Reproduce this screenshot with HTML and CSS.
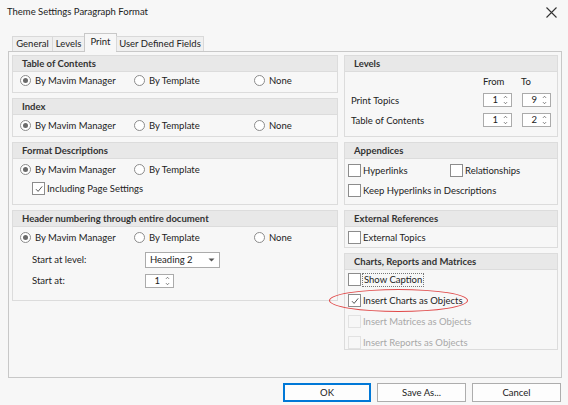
FILE: index.html
```html
<!DOCTYPE html>
<html>
<head>
<meta charset="utf-8">
<link rel="stylesheet" href="styles.css">
</head>
<body>
<div class="dialog">
  <div class="titlebar">
    <span class="title">Theme Settings Paragraph Format</span>
    <svg class="close" width="11" height="11" viewBox="0 0 11 11"><path d="M0.5 0.5 L10.5 10.5 M10.5 0.5 L0.5 10.5" stroke="#333" stroke-width="1.1" fill="none"/></svg>
  </div>
  <div class="tabs">
    <div class="tab t-general">General</div>
    <div class="tab t-levels">Levels</div>
    <div class="tab active t-print">Print</div>
    <div class="tab t-udf">User Defined Fields</div>
  </div>
  <div class="tabpanel">
    <div class="col">
      <div class="panel p-toc">
        <div class="phead">Table of Contents</div>
        <div class="pbody">
          <div class="radios">
            <label class="radio r1"><span class="rdot on"></span>By Mavim Manager</label>
            <label class="radio r2"><span class="rdot"></span>By Template</label>
            <label class="radio r3"><span class="rdot"></span>None</label>
          </div>
        </div>
      </div>
      <div class="panel p-index">
        <div class="phead">Index</div>
        <div class="pbody">
          <div class="radios">
            <label class="radio r1"><span class="rdot on"></span>By Mavim Manager</label>
            <label class="radio r2"><span class="rdot"></span>By Template</label>
            <label class="radio r3"><span class="rdot"></span>None</label>
          </div>
        </div>
      </div>
      <div class="panel p-format">
        <div class="phead">Format Descriptions</div>
        <div class="pbody">
          <div class="radios">
            <label class="radio r1"><span class="rdot on"></span>By Mavim Manager</label>
            <label class="radio r2"><span class="rdot"></span>By Template</label>
          </div>
          <label class="check indent"><span class="cbox"><svg width="10" height="10" viewBox="0 0 10 10"><path d="M2 5.2 L4.1 7.4 L8.2 2.4" stroke="#555" stroke-width="1" fill="none"/></svg></span>Including Page Settings</label>
        </div>
      </div>
      <div class="panel p-header">
        <div class="phead">Header numbering through entire document</div>
        <div class="pbody">
          <div class="radios">
            <label class="radio r1"><span class="rdot on"></span>By Mavim Manager</label>
            <label class="radio r2"><span class="rdot"></span>By Template</label>
            <label class="radio r3"><span class="rdot"></span>None</label>
          </div>
          <div class="field f-level">
            <span class="flabel">Start at level:</span>
            <div class="combo"><span>Heading 2</span><svg width="7" height="4" viewBox="0 0 7 4"><path d="M0.5 0.5 L3.5 3.5 L6.5 0.5 Z" fill="#555"/></svg></div>
          </div>
          <div class="field f-start">
            <span class="flabel">Start at:</span>
            <div class="spin"><span class="num">1</span><svg class="arrows" width="5" height="10" viewBox="0 0 5 10"><path d="M1 2.8 L2.5 1.3 L4 2.8 M1 7.2 L2.5 8.7 L4 7.2" stroke="#666" stroke-width="0.9" fill="none"/></svg></div>
          </div>
        </div>
      </div>
    </div>
    <div class="col">
      <div class="panel p-levels">
        <div class="phead">Levels</div>
        <div class="pbody">
          <div class="lvl-head"><span class="from">From</span><span class="to">To</span></div>
          <div class="lvl-row">
            <span class="llabel">Print Topics</span>
            <div class="spin"><span class="num">1</span><svg class="arrows" width="5" height="10" viewBox="0 0 5 10"><path d="M1 2.8 L2.5 1.3 L4 2.8 M1 7.2 L2.5 8.7 L4 7.2" stroke="#666" stroke-width="0.9" fill="none"/></svg></div>
            <div class="spin"><span class="num">9</span><svg class="arrows" width="5" height="10" viewBox="0 0 5 10"><path d="M1 2.8 L2.5 1.3 L4 2.8 M1 7.2 L2.5 8.7 L4 7.2" stroke="#666" stroke-width="0.9" fill="none"/></svg></div>
          </div>
          <div class="lvl-row">
            <span class="llabel">Table of Contents</span>
            <div class="spin"><span class="num">1</span><svg class="arrows" width="5" height="10" viewBox="0 0 5 10"><path d="M1 2.8 L2.5 1.3 L4 2.8 M1 7.2 L2.5 8.7 L4 7.2" stroke="#666" stroke-width="0.9" fill="none"/></svg></div>
            <div class="spin"><span class="num">2</span><svg class="arrows" width="5" height="10" viewBox="0 0 5 10"><path d="M1 2.8 L2.5 1.3 L4 2.8 M1 7.2 L2.5 8.7 L4 7.2" stroke="#666" stroke-width="0.9" fill="none"/></svg></div>
          </div>
        </div>
      </div>
      <div class="panel p-app">
        <div class="phead">Appendices</div>
        <div class="pbody">
          <div class="app-row">
            <label class="check c-hyper"><span class="cbox"></span>Hyperlinks</label>
            <label class="check"><span class="cbox"></span>Relationships</label>
          </div>
          <label class="check"><span class="cbox"></span>Keep Hyperlinks in Descriptions</label>
        </div>
      </div>
      <div class="panel p-ext">
        <div class="phead">External References</div>
        <div class="pbody">
          <label class="check"><span class="cbox"></span>External Topics</label>
        </div>
      </div>
      <div class="panel p-charts">
        <div class="phead">Charts, Reports and Matrices</div>
        <div class="pbody">
          <label class="check"><span class="cbox"></span><span class="focus">Show Caption</span></label>
          <label class="check"><span class="cbox"><svg width="10" height="10" viewBox="0 0 10 10"><path d="M2 5.2 L4.1 7.4 L8.2 2.4" stroke="#555" stroke-width="1" fill="none"/></svg></span>Insert Charts as Objects</label>
          <label class="check disabled"><span class="cbox"></span>Insert Matrices as Objects</label>
          <label class="check disabled"><span class="cbox"></span>Insert Reports as Objects</label>
        </div>
      </div>
    </div>
  </div>
  <div class="buttons">
    <button class="btn default">OK</button>
    <button class="btn">Save As...</button>
    <button class="btn">Cancel</button>
  </div>
  <div class="ellipse"></div>
</div>
</body>
</html>
```
FILE: styles.css
```css
* { box-sizing: border-box; }
html, body { margin: 0; padding: 0; }
body {
  width: 568px;
  height: 405px;
  background: #f7f7f7;
  font-family: "Lato", "Open Sans", sans-serif;
  font-size: 9.5px;
  color: #222;
  overflow: hidden;
}
.dialog { position: relative; width: 568px; height: 405px; }
.titlebar {
  height: 33px;
  display: flex;
  justify-content: space-between;
  padding: 5px 11px 0 7px;
}
.title { line-height: 14px; }
.close { margin-top: 2px; }
.tabs {
  display: flex;
  align-items: flex-end;
  height: 18px;
  margin-left: 12px;
  position: relative;
  z-index: 1;
}
.tab {
  height: 15px;
  line-height: 13px;
  border: 1px solid #d9d9d9;
  border-bottom: none;
  background: #f0f0f0;
  text-align: center;
  white-space: nowrap;
  margin-right: -1px;
}
.tab.active {
  line-height: 15px;
  background: #f7f7f7;
  border-color: #c8c8c8;
  margin-bottom: -1px;
  height: 19px;
}
.t-general { width: 41px; }
.t-levels { width: 33px; }
.t-print { width: 33px; }
.t-udf { width: 88px; }
.tabpanel {
  margin-left: 8px;
  width: 554px;
  height: 327px;
  border: 1px solid #c8c8c8;
  padding: 3px 2px 0 3px;
  display: grid;
  grid-template-columns: 326px 214px;
  column-gap: 6px;
  align-items: start;
}
.col { display: flex; flex-direction: column; gap: 5px; }
.panel {
  border: 1px solid #dcdcdc;
  background: #f7f7f7;
}
.phead {
  height: 16px;
  line-height: 15px;
  background: #e8e8e8;
  border-bottom: 1px solid #dcdcdc;
  font-weight: 700;
  padding-left: 9px;
  color: #333;
}
.pbody { padding: 0 0 0 7px; }
.p-toc { height: 38px; }
.p-index { height: 39px; }
.p-format { height: 63px; }
.p-header { height: 91px; }
.p-levels { height: 82px; }
.p-app { height: 63px; }
.p-ext { height: 38px; }
.p-charts { height: 97px; }

.radios { display: flex; height: 20px; align-items: center; padding-top: 1px; }
.p-toc .radios { height: 17px; padding-top: 0; }
.radio { display: flex; align-items: center; }
.r1 { width: 114px; }
.r2 { width: 120px; }
.rdot {
  width: 11px; height: 11px;
  border: 1px solid #8c8c8c;
  border-radius: 50%;
  background: #fff;
  margin-right: 4px;
  display: flex; align-items: center; justify-content: center;
}
.rdot.on::after {
  content: "";
  width: 5px; height: 5px;
  border-radius: 50%;
  background: #6a6a6a;
}
.check { display: flex; align-items: center; height: 20px; white-space: nowrap; }
.cbox {
  width: 13px; height: 13px;
  border: 1px solid #8c8c8c;
  background: #fff;
  margin-right: 2px;
  display: flex; align-items: center; justify-content: center;
  flex: none;
}
.indent { margin-left: 12px; height: 19px; }
.check.disabled { color: #a8a8a8; }
.check.disabled .cbox { border-color: #e2e2e2; background: #f7f7f7; }
.focus { outline: 1px dotted #777; outline-offset: 0; padding: 0 1px; line-height: 12px; }

.field { display: flex; align-items: center; padding-left: 12px; }
.flabel { width: 113px; }
.f-level { height: 21px; margin-top: 2px; }
.f-start { height: 21px; }
.combo {
  width: 75px; height: 16px;
  border: 1px solid #ababab;
  background: #fff;
  display: flex; align-items: center; justify-content: space-between;
  padding: 0 4px 0 4px;
}
.spin {
  width: 29px; height: 14px;
  border: 1px solid #ababab;
  background: #fff;
  display: flex; align-items: center; justify-content: flex-end;
  padding-right: 3px;
}
.num { margin-right: 5px; line-height: 12px; }
.arrows { display: block; flex: none; }

.lvl-head { height: 18px; display: flex; align-items: center; padding-left: 132px; }
.from { width: 38px; }
.lvl-row { display: flex; align-items: center; height: 20px; gap: 10px; }
.llabel { width: 122px; }

.p-levels .pbody { padding-left: 6px; }
.app-row { display: flex; }
.c-hyper { width: 102px; }
.p-app .pbody, .p-ext .pbody, .p-charts .pbody { padding-left: 3px; }
.p-app .pbody { padding-top: 1px; }
.p-charts .check { height: 21px; }
.p-charts .pbody { margin-top: -1px; }

.buttons {
  display: flex;
  justify-content: flex-end;
  gap: 6px;
  padding: 5px 7px 0 0;
}
.btn {
  font: inherit;
  color: #222;
  width: 89px; height: 19px;
  border: 1px solid #adadad;
  background: #fdfdfd;
  padding: 0;
}
.btn.default { border: 2px solid #0078d7; width: 88px; }
.ellipse {
  position: absolute;
  left: 329px; top: 289px;
  width: 139px; height: 23px;
  border: 1px solid #e04848;
  border-radius: 50%;
}
```
